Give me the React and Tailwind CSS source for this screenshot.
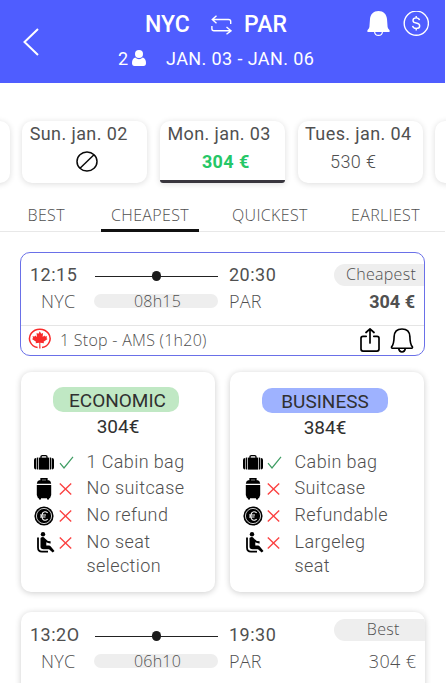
import React from 'react';

const days = [
  { id: 'prev' },
  { id: 'sun', label: 'Sun. jan. 02', none: true },
  { id: 'mon', label: 'Mon. jan. 03', price: '304 €', active: true },
  { id: 'tue', label: 'Tues. jan. 04', price: '530 €' },
  { id: 'next' },
];

const tabs = [
  { label: 'BEST', box: 'w-[92px] pl-[27.5px]' },
  { label: 'CHEAPEST', box: 'w-[116px] pl-[19px]', active: true },
  { label: 'QUICKEST', box: 'w-[119px] pl-[24px]' },
  { label: 'EARLIEST', box: 'w-[118px] pl-[24px]' },
];

const BackIcon = () => (
  <svg className="block h-[28px] w-[16px]" viewBox="0 0 16 28" fill="none" stroke="white" strokeWidth="2">
    <path d="M15 1 L1.5 14 L15 27" />
  </svg>
);

const SwapIcon = () => (
  <svg className="block h-[20px] w-[21px]" viewBox="0 0 21 20" fill="none" stroke="white" strokeWidth="1.4">
    <path d="M5.5 .7 L1.3 4.5 L5.5 8.2 M1.3 4.5 H17.5 Q19.7 4.5 19.7 6.5 V9" />
    <path d="M15.5 12 L20 15.8 L15.5 19.3 M20 15.8 H3 Q.9 15.8 .9 13.8 V11" />
  </svg>
);

const UserIcon = () => (
  <svg className="block h-[16px] w-[14px]" viewBox="0 0 14 16" fill="white">
    <circle cx="7" cy="4" r="4" />
    <path d="M3.2 7.6 Q7 10.8 10.8 7.6 Q14 9 14 13 Q14 16 11.5 16 H2.5 Q0 16 0 13 Q0 9 3.2 7.6Z" />
  </svg>
);

const BellSolidIcon = () => (
  <svg className="block h-[25px] w-[23px]" viewBox="0 0 23 25" fill="white">
    <path d="M11.5 0 C16.5 0 19.5 3 20 8 L20.6 16 Q20.8 17.5 22.4 19 Q23 20 22.4 21 H.6 Q0 20 .6 19 Q2.2 17.5 2.4 16 L3 8 C3.5 3 6.5 0 11.5 0Z" />
    <path d="M7.6 21 Q8 24.4 11.5 24.4 Q15 24.4 15.4 21" fill="none" stroke="white" strokeWidth="1.2" />
  </svg>
);

const DollarIcon = () => (
  <svg className="block h-[26px] w-[26px]" viewBox="0 0 26 26" fill="none" stroke="white" strokeWidth="1.4">
    <circle cx="13.3" cy="12.2" r="12.1" />
    <path d="M16.5 9.2 Q16 6.9 13.2 6.9 Q10 6.9 10 9.4 Q10 11.5 13.2 12 Q16.7 12.6 16.7 14.9 Q16.7 17.4 13.2 17.4 Q10 17.4 9.6 14.9 M13.2 5 V6.9 M13.2 17.4 V19.5" />
  </svg>
);

const NoneIcon = () => (
  <svg className="block h-[21px] w-[22px]" viewBox="0 0 22 21" fill="none" stroke="#0a0a0a" strokeWidth="1.5">
    <ellipse cx="11" cy="10.5" rx="10" ry="9.6" />
    <path d="M4 17.2 L18 3.8" />
  </svg>
);

const MapleIcon = () => (
  <svg className="block h-[22px] w-[24px]" viewBox="0 0 24 22">
    <path d="M9.6 19.6 A10.3 9.3 0 1 1 14 19.6" fill="none" stroke="#f92a2a" strokeWidth="1.5" />
    <path
      d="M11.8 3.3 L13.2 5.8 L15 5 L14.7 9 L16.4 7.4 L17 8.5 L19.1 8.2 L18.5 10.2 L19.6 11 L15.6 13.8 L16 15.2 L12.3 14.7 L12.5 20.6 H11.2 L11.3 14.7 L7.6 15.2 L8 13.8 L4 11 L5.1 10.2 L4.5 8.2 L6.6 8.5 L7.2 7.4 L8.9 9 L8.6 5 L10.4 5.8Z"
      fill="#f92a2a"
    />
  </svg>
);

const ShareIcon = () => (
  <svg
    className="block h-[25px] w-[20px]"
    viewBox="0 0 20 25"
    fill="none"
    stroke="black"
    strokeWidth="1.7"
    strokeLinecap="round"
    strokeLinejoin="round"
  >
    <path d="M6.2 8.3 H3 Q1 8.3 1 10.3 V21.1 Q1 23.1 3 23.1 H17 Q19 23.1 19 21.1 V10.3 Q19 8.3 17 8.3 H13.8 M10 15 V1 M6 4.5 L10 .9 L14 4.5" />
  </svg>
);

const BellIcon = () => (
  <svg className="block h-[25px] w-[24px]" viewBox="0 0 24 26" fill="none" stroke="black" strokeWidth="1.7" strokeLinejoin="round">
    <path d="M12 1 C7 1 4 4 3.8 9 C3.7 15 3.2 17 1.2 19.6 Q.8 21 2 21 H22 Q23.2 21 22.8 19.6 C20.8 17 20.3 15 20.2 9 C20 4 17 1 12 1Z" />
    <path d="M8.5 21.3 Q9 25 12 25 Q15 25 15.5 21.3" />
  </svg>
);

const BagIcon = () => (
  <svg className="block h-[15px] w-[20px]" viewBox="0 0 20 15">
    <path d="M7 3 V1.8 Q7 .7 8.2 .7 H11.8 Q13 .7 13 1.8 V3" fill="none" stroke="black" strokeWidth="1.3" />
    <path d="M5 2.6 H15 V14.6 H5Z" />
    <path d="M4.3 2.6 V14.6 H3.5 Q2.6 14.6 2.6 13.8 V3.4 Q2.6 2.6 3.5 2.6Z M2 2.9 V14.4 Q0 14.4 0 12.4 V5 Q0 2.9 2 2.9Z" />
    <path d="M15.7 2.6 V14.6 H16.5 Q17.4 14.6 17.4 13.8 V3.4 Q17.4 2.6 16.5 2.6Z M18 2.9 V14.4 Q20 14.4 20 12.4 V5 Q20 2.9 18 2.9Z" />
  </svg>
);

const SuitcaseIcon = () => (
  <svg className="ml-[1.5px] block h-[22px] w-[16px]" viewBox="0 0 16 22">
    <path d="M5.2 3 V.9 H10.8 V3" fill="none" stroke="black" strokeWidth="1.7" />
    <path d="M3 2.3 H13 Q15 2.8 15.2 5.8 H.8 Q1 2.8 3 2.3Z M.8 7 H15.2 V17 L14 20.3 H13 V21.6 H11 V20.3 H5 V21.6 H3 V20.3 H2 L.8 17Z" />
  </svg>
);

const RefundIcon = () => (
  <svg className="block h-[20px] w-[20px]" viewBox="0 0 20 20">
    <circle cx="10" cy="10" r="9.6" />
    <circle cx="10" cy="10" r="7.6" fill="none" stroke="white" strokeWidth=".8" />
    <path d="M13.7 6.8 Q10.8 4.4 8.5 7.2 Q7 10 8.5 12.8 Q10.8 15.6 13.7 13.2 M6 9 H12 M6 11 H11.5" fill="none" stroke="white" strokeWidth="1.1" />
  </svg>
);

const SeatIcon = () => (
  <svg className="ml-[3px] block h-[21px] w-[18px]" viewBox="0 0 18 21">
    <circle cx="6" cy="2.3" r="2.2" />
    <path d="M1 5.5 V15.5 Q1 19.6 5 19.6 H11" fill="none" stroke="black" strokeWidth="1.8" />
    <path d="M4 5.4 Q6.5 4.3 8 6.5 Q10 9.3 13.6 9.3 V11.4 Q11 11.5 9.3 10.3 V13.4 H12 Q13 13.4 13.8 14.5 L17.5 19 L15.7 20.5 L12 17.3 H6.5 Q3.5 17.3 3.5 14.5 V7 Q3.3 6 4 5.4Z" />
  </svg>
);

const CheckIcon = () => (
  <svg className="block h-[13px] w-[15px]" viewBox="0 0 15 13" fill="none" stroke="#3f9d63" strokeWidth="1.2">
    <path d="M1 7.2 L5 12 L14 .8" />
  </svg>
);

const CrossIcon = () => (
  <svg className="block h-[12px] w-[13px]" viewBox="0 0 13 12" fill="none" stroke="#fb4343" strokeWidth="1.4">
    <path d="M.8 .5 L12.2 11.5 M12.2 .5 L.8 11.5" />
  </svg>
);

const featureIcons = [BagIcon, SuitcaseIcon, RefundIcon, SeatIcon];
const rowHeights = ['h-[26px]', 'h-[27px]', 'h-[27px]', 'h-[48px]'];

const Header = () => (
  <header className="flex h-[83px] w-[445px] bg-[#4f5dff] text-white">
    <div className="w-[118px] pt-[28px] pl-[23px]">
      <BackIcon />
    </div>
    <div className="w-[249px] pt-[12px]">
      <div className="flex h-[26px] items-center pl-[27px] text-[23px] leading-[26px] font-medium">
        <span className="w-[66px]">NYC</span>
        <div className="w-[33px]">
          <SwapIcon />
        </div>
        <span className="tracking-[0.2px]">PAR</span>
      </div>
      <div className="mt-[9px] flex h-[24px] items-center text-[18px] leading-[24px] whitespace-nowrap">
        <span className="w-[14px]">2</span>
        <div className="-mt-[2px]">
          <UserIcon />
        </div>
        <span className="pl-[20px] tracking-[0.4px]">JAN. 03 - JAN. 06</span>
      </div>
    </div>
    <div className="flex gap-[13px] pt-[11px]">
      <BellSolidIcon />
      <DollarIcon />
    </div>
  </header>
);

const DayCard = ({ day }) => (
  <div
    className={`relative h-[62px] w-[125px] shrink-0 overflow-hidden bg-white whitespace-nowrap shadow-[0_1px_6px_rgba(0,0,0,0.14)] ${
      day.active ? 'rounded-t-[10px] rounded-b-[3px]' : 'rounded-[10px]'
    }`}
  >
    {day.label && (
      <div className="h-[26px] pl-[7.5px] text-[18px] leading-[25px] tracking-[0.4px] text-[#505050]">{day.label}</div>
    )}
    {day.none && (
      <div className="pt-[4px] pl-[54px]">
        <NoneIcon />
      </div>
    )}
    {day.price && (
      <div
        className={`text-[18px] leading-[29px] ${
          day.active
            ? 'pl-[42px] font-bold tracking-[0.4px] text-[#26c767]'
            : 'pl-[32.5px] font-light tracking-[0.4px] text-[#505050]'
        }`}
      >
        {day.price}
      </div>
    )}
    {day.active && <div className="absolute bottom-0 left-0 h-[3px] w-full bg-[#38353d]" />}
  </div>
);

const Flight = ({ depart, arrive, duration, badge, price, selected }) => (
  <div className="flex text-[#505050]">
    <div className="w-[73px] pl-[9px]">
      <div className="text-[18px] leading-[26px] tracking-[0.5px]">{depart}</div>
      <div className="pl-[11px] font-['Open_Sans'] text-[18px] leading-[27px] font-light tracking-[0.2px]">NYC</div>
    </div>
    <div className="w-[124px] pl-px">
      <div className="flex h-[28px] items-center">
        <div className="h-px w-[57px] bg-[#222]" />
        <div className="h-[10px] w-[10px] rounded-full bg-[#1c1c1c]" />
        <div className="h-px w-[57px] bg-[#222]" />
      </div>
      <div className="mt-[4px] -ml-px h-[14px] rounded-full bg-[#eee] pl-[3px] text-center font-['Open_Sans'] text-[16px] leading-[14px] font-light tracking-[0.2px]">
        {duration}
      </div>
    </div>
    <div className="w-[104px] pl-[11px]">
      <div className="text-[18px] leading-[26px] tracking-[0.5px]">{arrive}</div>
      <div className="font-['Open_Sans'] text-[18px] leading-[27px] font-light tracking-[0.2px]">PAR</div>
    </div>
    <div className="flex-1">
      <div
        className={`ml-[12px] h-[22px] rounded-l-[11px] bg-[#eee] text-center font-['Open_Sans'] text-[16px] leading-[21px] font-light tracking-[0.3px] ${
          selected ? 'mt-[2px] pl-[4px]' : '-mt-[3px] mb-[5px] pl-[8px]'
        }`}
      >
        {badge}
      </div>
      <div
        className={`pt-[2px] text-right text-[18px] leading-[27px] ${
          selected ? 'pr-[9px] font-bold' : "pr-[8px] font-['Open_Sans'] font-light tracking-[0.4px]"
        }`}
      >
        {price}
      </div>
    </div>
  </div>
);

const FareCard = ({ name, price, pill, priceBox, tight, features }) => (
  <div className="h-[220px] w-[194px] rounded-[10px] bg-white shadow-[0_1px_6px_rgba(0,0,0,0.2)]">
    <div className={`ml-[32px] h-[25px] w-[126px] rounded-[10px] text-center text-[19px] leading-[27px] text-[#303030] ${pill}`}>
      {name}
    </div>
    <div className={`text-center text-[19px] leading-[30px] text-[#303030] ${priceBox}`}>{price}</div>
    {features.map((f, i) => {
      const Icon = featureIcons[i];
      return (
        <div key={f.text} className={`flex font-light ${rowHeights[i]}`}>
          <div className={`flex h-[25px] items-center pl-[13px] ${tight ? 'w-[37px]' : 'w-[38px]'}`}>
            <Icon />
          </div>
          <div className="flex h-[25px] w-[27px] items-center">{f.ok ? <CheckIcon /> : <CrossIcon />}</div>
          <div className="w-[108px] pl-[0.5px] text-[18px] leading-[24px] tracking-[0.4px] text-[#505050]">{f.text}</div>
        </div>
      );
    })}
  </div>
);

const App = () => (
  <div className="h-[683px] w-[446px] overflow-hidden bg-white font-['Roboto',sans-serif]">
    <Header />

    <div className="mt-[38px] -ml-[115.5px] flex w-[700px] gap-[12.7px]">
      {days.map((day) => (
        <DayCard key={day.id} day={day} />
      ))}
    </div>

    <nav className="mt-[22px] flex h-[27px] w-[445px] border-b border-[#e8e8e8] font-['Open_Sans'] text-[16px] leading-[21px] font-light tracking-[0.35px] text-[#505050]">
      {tabs.map((tab) => (
        <div key={tab.label} className={`relative ${tab.box}`}>
          {tab.label}
          {tab.active && <div className="absolute top-[24px] left-[9px] h-[3px] w-[98px] bg-[#111]" />}
        </div>
      ))}
    </nav>

    <section className="mt-[20px] ml-[20px] h-[104px] w-[405px] overflow-hidden rounded-[10px] border border-[#6a70e8] pt-[9px]">
      <div className="h-[63px]">
        <Flight depart="12:15" arrive="20:30" duration="08h15" badge="Cheapest" price="304 €" selected />
      </div>
      <div className="flex h-[30px] border-t border-[#e5e5e5] pt-[2px] pl-[7px]">
        <MapleIcon />
        <span className="w-[308px] pl-[8px] font-['Open_Sans'] text-[16px] leading-[24px] font-light tracking-[0.27px] text-[#505050]">
          1 Stop - AMS (1h20)
        </span>
        <ShareIcon />
        <div className="pl-[10px]">
          <BellIcon />
        </div>
      </div>
    </section>

    <div className="mt-[16px] flex gap-[15px] pl-[21px]">
      <FareCard
        name="ECONOMIC"
        price="304€"
        pill="mt-[15px] bg-[#c0e8c4] pl-[3px]"
        priceBox="h-[38px]"
        features={[
          { text: '1 Cabin bag', ok: true },
          { text: 'No suitcase' },
          { text: 'No refund' },
          { text: 'No seat selection' },
        ]}
      />
      <FareCard
        name="BUSINESS"
        price="384€"
        pill="mt-[16px] bg-[#9eb2ff]"
        priceBox="h-[37px] pr-[4px]"
        tight
        features={[
          { text: 'Cabin bag', ok: true },
          { text: 'Suitcase' },
          { text: 'Refundable' },
          { text: 'Largeleg seat' },
        ]}
      />
    </div>

    <section className="mt-[20px] ml-[21px] h-[104px] w-[403.5px] overflow-hidden rounded-t-[10px] bg-white pt-[10px] shadow-[0_1px_6px_rgba(0,0,0,0.2)]">
      <Flight depart="13:2O" arrive="19:30" duration="06h10" badge="Best" price="304 €" />
    </section>
  </div>
);

export default App;
